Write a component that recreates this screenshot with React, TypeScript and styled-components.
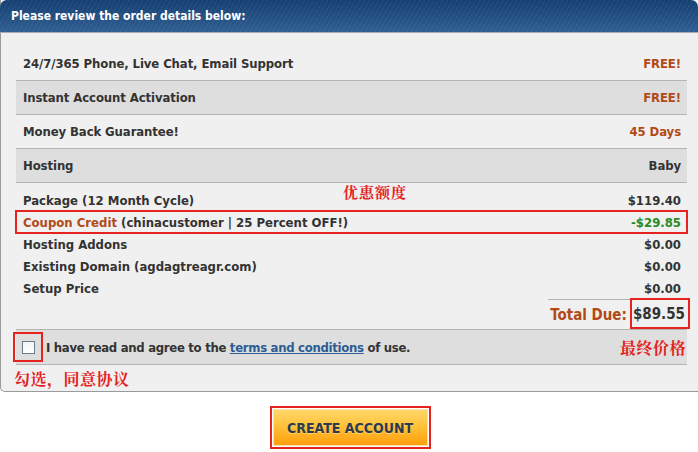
import React from "react";
import styled, { createGlobalStyle } from "styled-components";

const Global = createGlobalStyle`
  html, body { margin: 0; padding: 0; background: #ffffff; }
  body { width: 698px; font-family: "DejaVu Sans", Verdana, sans-serif; font-stretch: condensed; color: #333333; }
`;

const Page = styled.div`
  width: 698px;
  display: flex;
  flex-direction: column;
  align-items: stretch;
`;

const Panel = styled.section`
  border-left: 1px solid #9a9a9a;
  border-bottom: 1px solid #9a9a9a;
  border-bottom-left-radius: 5px;
  background: #f0f0f0;
  display: flex;
  flex-direction: column;
`;

const Header = styled.div`
  height: 32px;
  margin-left: -1px;
  border-top-left-radius: 7px;
  border-top-right-radius: 7px;
  background:
    repeating-linear-gradient(-60deg, rgba(255,255,255,0.05) 0 1px, rgba(255,255,255,0) 1px 4px),
    linear-gradient(#163f72, #2f5f93);
  border-bottom: 1px solid #a8aeb5;
  display: flex;
  align-items: center;
  padding-left: 11px;
  color: #ffffff;
  font-size: 12px;
  font-weight: bold;
`;

const Body = styled.div`
  padding: 14px 11px 0 15px;
  display: flex;
  flex-direction: column;
`;

const Row = styled.div<{ $shade?: boolean }>`
  height: 33px;
  display: flex;
  align-items: center;
  justify-content: space-between;
  padding: 0 6px 0 7px;
  background: ${(p) => (p.$shade ? "#dedede" : "transparent")};
  border-bottom: 1px solid #b4b4b4;
  font-size: 13px;
  font-weight: bold;
  letter-spacing: -0.1px;
`;

const Accent = styled.span<{ $tone?: "orange" | "green" }>`
  color: ${(p) => (p.$tone === "green" ? "#2c8a23" : "#b24a18")};
`;

const Items = styled.div`
  padding-top: 6px;
  display: flex;
  flex-direction: column;
`;

const Line = styled.div<{ $marked?: boolean }>`
  position: relative;
  height: 22px;
  display: flex;
  align-items: center;
  justify-content: space-between;
  padding: 0 6px 0 7px;
  font-size: 13px;
  font-weight: bold;
  ${(p) => (p.$marked ? "outline: 2px solid #e5221d; outline-offset: -1px;" : "")}
`;

const Note = styled.span`
  position: absolute;
  left: 327px;
  top: -8px;
  color: #e5221d;
  font-family: "Noto Serif CJK SC", "Noto Sans CJK SC", serif;
  font-size: 15px;
  font-weight: bold;
  letter-spacing: 1px;
`;

const TotalRow = styled.div`
  display: flex;
  justify-content: flex-end;
  border-bottom: 1px solid #b4b4b4;
`;

const Total = styled.div`
  width: 139px;
  height: 29px;
  border-top: 1px solid #b4b4b4;
  display: flex;
  align-items: center;
  justify-content: flex-end;
  gap: 3px;
  font-size: 15px;
  font-weight: bold;
`;

const TotalValue = styled.span`
  border: 2px solid #e5221d;
  height: 27px;
  display: flex;
  align-items: center;
  padding: 0 3px 0 1px;
  margin-right: -3px;
  margin-top: -2px;
`;

const AgreeRow = styled.div`
  height: 34px;
  display: flex;
  align-items: center;
  justify-content: space-between;
  background: #dedede;
  border-bottom: 1px solid #b4b4b4;
  padding: 0 1px 0 0;
  font-size: 13px;
  font-weight: bold;
  letter-spacing: -0.3px;
`;

const AgreeLabel = styled.label`
  display: flex;
  align-items: center;
  gap: 3px;
`;

const CheckFrame = styled.span`
  margin-left: -3px;
  width: 26px;
  height: 26px;
  border: 2px solid #e5221d;
  display: flex;
  align-items: center;
  justify-content: center;
`;

const Box = styled.span`
  width: 11px;
  height: 11px;
  border: 1px solid #6b7b8e;
  background: linear-gradient(#f4f4f4, #ffffff);
`;

const Link = styled.a`
  color: #2d5d94;
  text-decoration: underline;
`;

const Mark = styled.span`
  color: #e5221d;
  font-family: "Noto Serif CJK SC", "Noto Sans CJK SC", serif;
  font-size: 16px;
  font-weight: bold;
  letter-spacing: 0.5px;
`;

const Footnote = styled.div`
  height: 26px;
  display: flex;
  align-items: center;
  padding-left: 13px;
  margin-left: -15px;
`;

const Actions = styled.div`
  display: flex;
  justify-content: center;
  padding-top: 14px;
`;

const ButtonFrame = styled.div`
  border: 2px solid #e5221d;
  padding: 1px;
  margin-left: 2px;
`;

const Button = styled.button`
  width: 155px;
  height: 37px;
  border: 1px solid #f8e2b0;
  background: linear-gradient(#ffd76a 0%, #ffc23a 45%, #ff9e0c 100%);
  color: #2a3b4c;
  font-family: "DejaVu Sans", sans-serif;
  font-stretch: condensed;
  font-size: 14px;
  font-weight: bold;
  padding: 0;
  text-shadow: 0 1px 0 rgba(255, 255, 255, 0.35);
  cursor: pointer;
`;

const items: { label: React.ReactNode; value: React.ReactNode; marked?: boolean; note?: string }[] = [
  { label: "Package (12 Month Cycle)", value: "$119.40", note: "优惠额度" },
  {
    label: (
      <span>
        <Accent>Coupon Credit</Accent> (chinacustomer | 25 Percent OFF!)
      </span>
    ),
    value: <Accent $tone="green">-$29.85</Accent>,
    marked: true,
  },
  { label: "Hosting Addons", value: "$0.00" },
  { label: "Existing Domain (agdagtreagr.com)", value: "$0.00" },
  { label: "Setup Price", value: "$0.00" },
];

export default function App() {
  return (
    <Page>
      <Global />
      <Panel>
        <Header>Please review the order details below:</Header>
        <Body>
          <Row>
            <span>24/7/365 Phone, Live Chat, Email Support</span>
            <Accent>FREE!</Accent>
          </Row>
          <Row $shade>
            <span>Instant Account Activation</span>
            <Accent>FREE!</Accent>
          </Row>
          <Row>
            <span>Money Back Guarantee!</span>
            <Accent>45 Days</Accent>
          </Row>
          <Row $shade>
            <span>Hosting</span>
            <span>Baby</span>
          </Row>
          <Items>
            {items.map((it, i) => (
              <Line key={i} $marked={it.marked}>
                <span>{it.label}</span>
                {it.note && <Note>{it.note}</Note>}
                <span>{it.value}</span>
              </Line>
            ))}
          </Items>
          <TotalRow>
            <Total>
              <Accent>Total Due:</Accent>
              <TotalValue>$89.55</TotalValue>
            </Total>
          </TotalRow>
          <AgreeRow>
            <AgreeLabel>
              <CheckFrame>
                <Box />
              </CheckFrame>
              <span>
                I have read and agree to the <Link>terms and conditions</Link> of use.
              </span>
            </AgreeLabel>
            <Mark>最终价格</Mark>
          </AgreeRow>
          <Footnote>
            <Mark>勾选，同意协议</Mark>
          </Footnote>
        </Body>
      </Panel>
      <Actions>
        <ButtonFrame>
          <Button>CREATE ACCOUNT</Button>
        </ButtonFrame>
      </Actions>
    </Page>
  );
}
